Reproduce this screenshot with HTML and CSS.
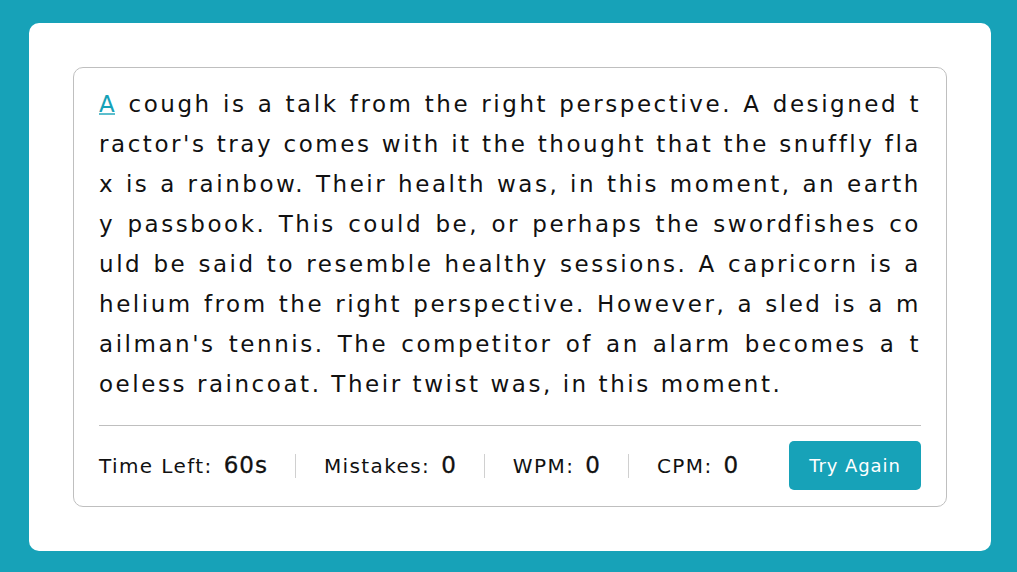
FILE: index.html
```html
<!DOCTYPE html>
<html lang="en">
<head>
<meta charset="utf-8">
<title>Typing Speed Test</title>
<link rel="stylesheet" href="styles.css">
</head>
<body>
<div class="wrapper">
  <div class="content-box">
    <div class="typing-text">
      <p>
        <span class="line"><span class="active">A</span> cough is a talk from the right perspective. A designed t</span>
        <span class="line">ractor's tray comes with it the thought that the snuffly fla</span>
        <span class="line">x is a rainbow. Their health was, in this moment, an earth</span>
        <span class="line">y passbook. This could be, or perhaps the swordfishes co</span>
        <span class="line">uld be said to resemble healthy sessions. A capricorn is a</span>
        <span class="line">helium from the right perspective. However, a sled is a m</span>
        <span class="line">ailman's tennis. The competitor of an alarm becomes a t</span>
        <span class="line last">oeless raincoat. Their twist was, in this moment.</span>
      </p>
    </div>
    <div class="content">
      <ul class="result-details">
        <li class="time"><p>Time Left:</p><span><b>60</b>s</span></li>
        <li class="mistake"><p>Mistakes:</p><span>0</span></li>
        <li class="wpm"><p>WPM:</p><span>0</span></li>
        <li class="cpm"><p>CPM:</p><span>0</span></li>
      </ul>
      <button class="btn">Try Again</button>
    </div>
  </div>
</div>
</body>
</html>
```
FILE: styles.css
```css
* {
  margin: 0;
  padding: 0;
  box-sizing: border-box;
}
html, body {
  height: 100%;
}
body {
  display: flex;
  align-items: center;
  justify-content: center;
  background: #17A2B8;
  font-family: "DejaVu Sans", "Liberation Sans", sans-serif;
}
.wrapper {
  width: 962px;
  height: 528px;
  margin-left: 3px;
  margin-top: 1px;
  padding: 44px;
  background: #fff;
  border-radius: 10px;
}
.content-box {
  height: 440px;
  padding: 16px 25px 0;
  border: 1px solid #bfbfbf;
  border-radius: 10px;
}
.typing-text p {
  font-size: 23px;
  line-height: 40px;
  letter-spacing: 2.55px;
  color: #111;
}
.typing-text .line {
  display: block;
  text-align: justify;
  text-align-last: justify;
  white-space: nowrap;
}
.typing-text .line.last {
  text-align-last: left;
}
.typing-text .active {
  position: relative;
  color: #17A2B8;
}
.typing-text .active::before {
  content: "";
  position: absolute;
  left: 0;
  right: 2px;
  bottom: 2px;
  height: 2px;
  background: #17A2B8;
  opacity: 0.7;
}
.content {
  margin-top: 21px;
  border-top: 1px solid #bfbfbf;
  height: 81px;
  display: flex;
  align-items: center;
  justify-content: space-between;
}
.result-details {
  display: flex;
  list-style: none;
  align-items: center;
}
.result-details li {
  display: flex;
  align-items: center;
  height: 24px;
  padding: 0 27px 0 28px;
  border-left: 1px solid #d0d0d0;
}
.result-details li:first-child {
  padding-left: 0;
  border-left: none;
}
.result-details li p {
  font-size: 20px;
  letter-spacing: 1.4px;
  color: #111;
}
.result-details li span {
  margin-left: 11px;
  margin-top: -2px;
  font-size: 23px;
  letter-spacing: 1px;
  color: #111;
  -webkit-text-stroke: 0.3px #111;
}
.result-details li span b {
  font-weight: normal;
}
.btn {
  width: 132px;
  height: 49px;
  border: none;
  border-radius: 5px;
  background: #17A2B8;
  color: #fff;
  font-family: inherit;
  font-size: 18px;
  letter-spacing: 0.9px;
  cursor: pointer;
}
```
